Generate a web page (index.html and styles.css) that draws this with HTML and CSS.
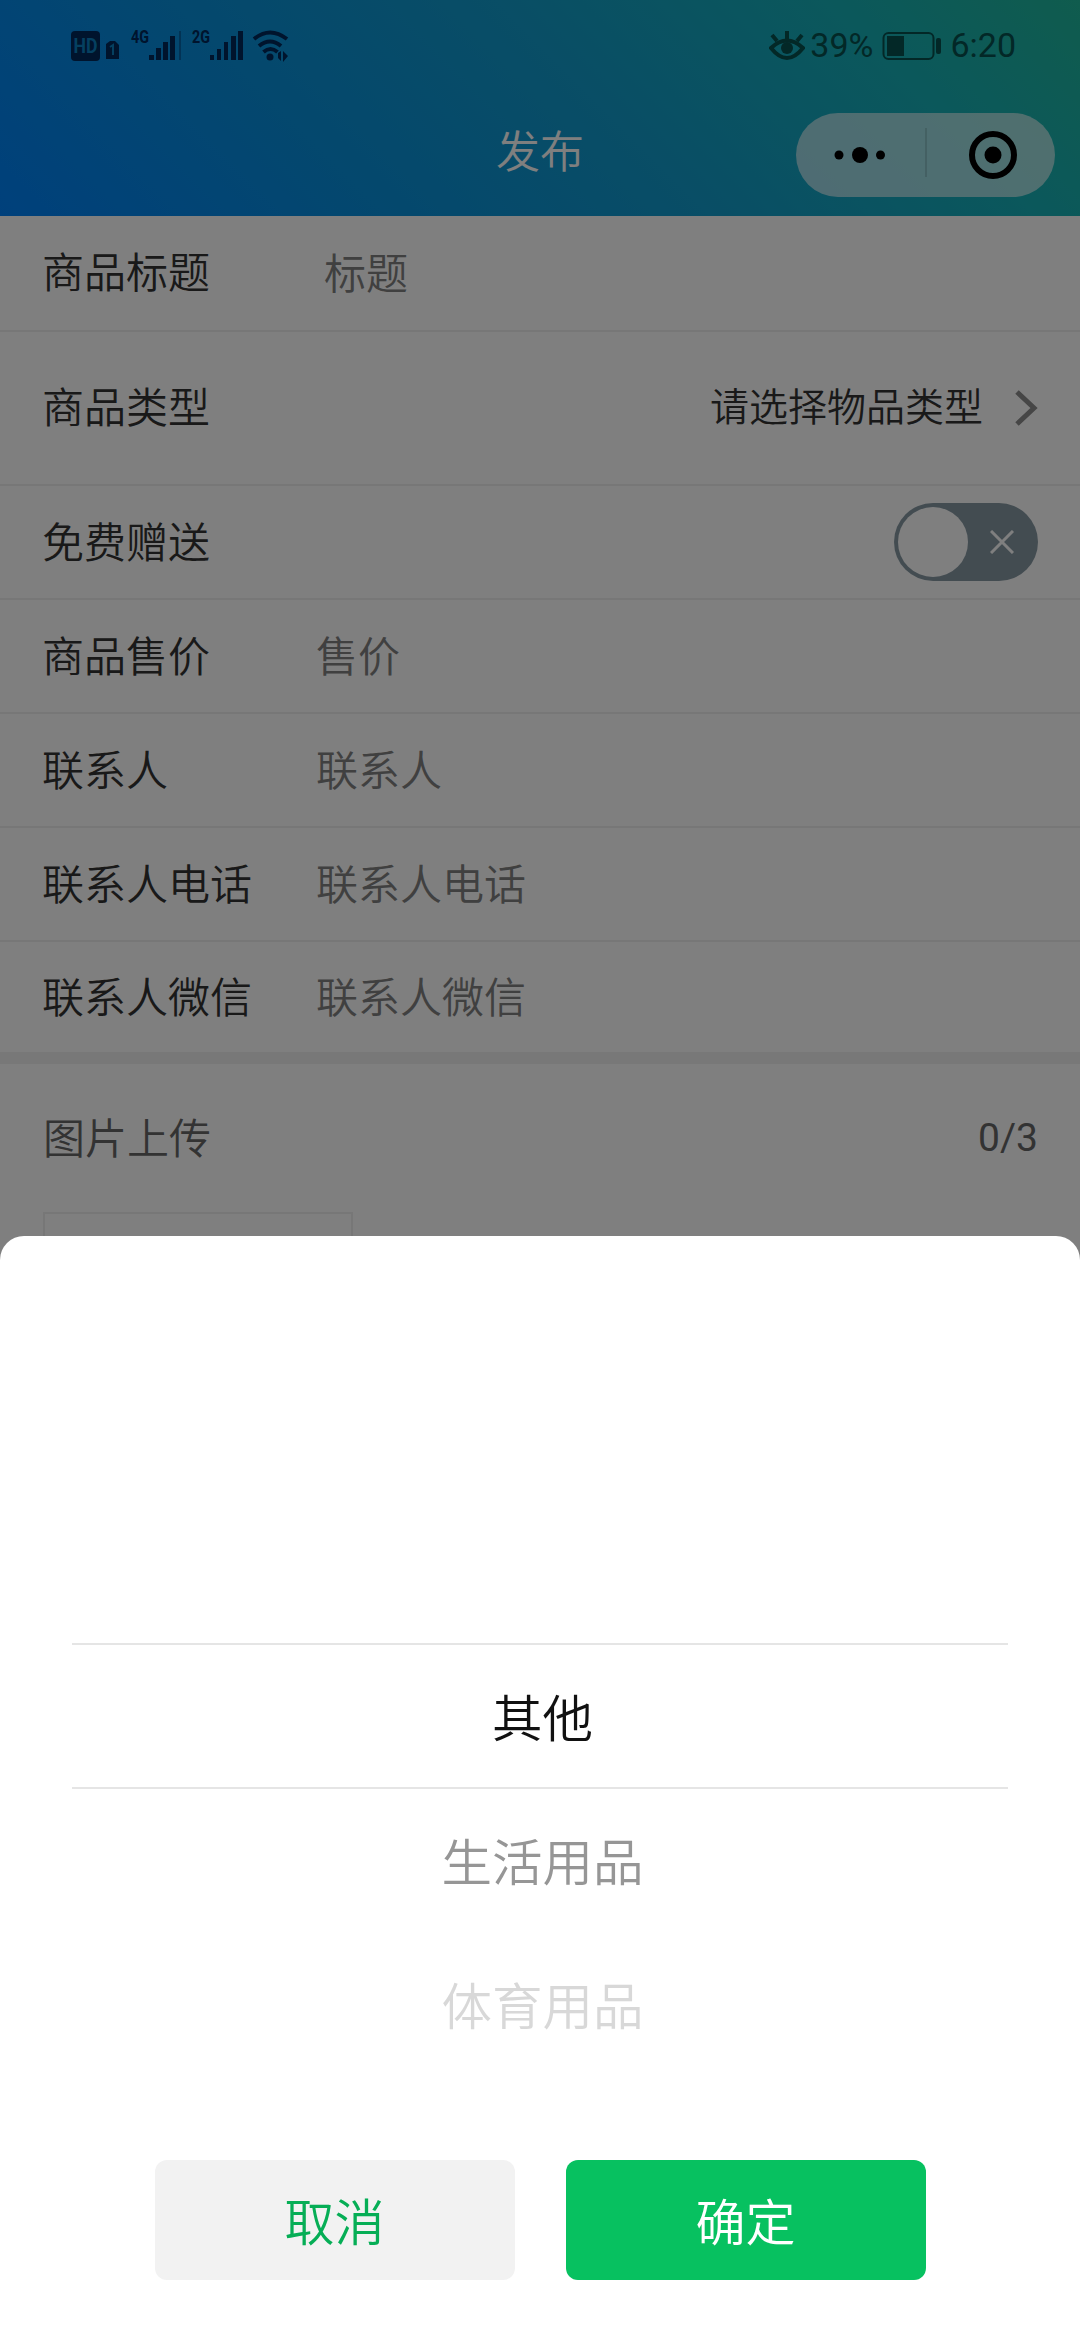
FILE: index.html
```html
<!DOCTYPE html>
<html lang="zh-CN">
<head>
    <meta charset="UTF-8">
    <meta name="viewport" content="width=device-width, initial-scale=1.0">
    <title>发布</title>
    <link rel="stylesheet" href="styles.css">
</head>
<body>
    <header class="header">
        <div class="status-bar">
            <svg class="status-left" width="220" height="36" viewBox="0 0 220 36">
                <rect x="1" y="4" width="29" height="30" rx="4"/>
                <text class="hd" x="3.500" y="26" textLength="24" lengthAdjust="spacingAndGlyphs">HD</text>
                <path d="M36 17l4-3h5l4 4v14h-13z"/>
                <path class="cut" d="M40 20l3-2v10"/>
                <text class="net" x="61" y="16" textLength="18" lengthAdjust="spacingAndGlyphs">4G</text>
                <path d="M79 28h5v5h-5zM86 21h5v12h-5zM93 15h5v18h-5zM100 9h5v24h-5z"/>
                <path class="faint" d="M109 4h2v29h-2z"/>
                <text class="net" x="122" y="16" textLength="18" lengthAdjust="spacingAndGlyphs">2G</text>
                <path d="M140 28h4v5h-4zM147 22h4v11h-4zM154 15h4v18h-4zM161 9h5v24h-5zM168 4h5v29h-5z"/>
                <path class="arc" d="M184 12q16-13 33 0M189 19q11-9 22 0M193.500 25q7-6 14 0"/>
                <circle cx="200" cy="30" r="3.500"/>
                <path d="M208 26l3-2v10l-3-3zM213 24l5 5-5 6z"/>
            </svg>
            <div class="status-right">
                <svg width="36" height="32" viewBox="0 0 36 32">
                    <path class="eye" d="M2 18q16-15 32 0q-16 20-32 0zM3 5l5 6M18 1v8M33 5l-5 6"/>
                    <circle cx="18" cy="18" r="6"/>
                </svg>
                <span class="battery-text">39%</span>
                <svg class="battery" width="60" height="30" viewBox="0 0 60 30">
                    <rect class="outline" x="1.500" y="2" width="50" height="26" rx="5"/>
                    <rect x="5" y="5" width="17" height="20"/>
                    <rect x="54" y="7" width="5" height="16" rx="2"/>
                </svg>
                <span>6:20</span>
            </div>
        </div>
        <div class="nav-bar">
            <h1>发布</h1>
            <div class="capsule">
                <svg width="259" height="84" viewBox="0 0 259 84">
                    <circle cx="43" cy="42" r="4.500"/>
                    <circle cx="64" cy="42" r="8"/>
                    <circle cx="84.500" cy="42" r="4.500"/>
                    <path class="split" d="M130 15v49"/>
                    <circle class="ring" cx="197" cy="42" r="21"/>
                    <circle cx="197" cy="42" r="8.500"/>
                </svg>
            </div>
        </div>
    </header>

    <form class="form">
        <div class="form-group first">
            <label for="title">商品标题</label>
            <input type="text" id="title" placeholder="标题">
        </div>
        <div class="form-group tall">
            <label>商品类型</label>
            <div class="select">
                <span>请选择物品类型</span>
                <svg width="24" height="40" viewBox="0 0 24 40"><path d="M3 4l17 16L3 36"/></svg>
            </div>
        </div>
        <div class="form-group">
            <label>免费赠送</label>
            <div class="switch">
                <div class="knob"></div>
                <svg width="24" height="24" viewBox="0 0 24 24"><path d="M1 1l22 22M23 1L1 23"/></svg>
            </div>
        </div>
        <div class="form-group">
            <label for="price">商品售价</label>
            <input type="text" id="price" placeholder="售价">
        </div>
        <div class="form-group">
            <label for="contact">联系人</label>
            <input type="text" id="contact" placeholder="联系人">
        </div>
        <div class="form-group">
            <label for="phone">联系人电话</label>
            <input type="text" id="phone" placeholder="联系人电话">
        </div>
        <div class="form-group last">
            <label for="wechat">联系人微信</label>
            <input type="text" id="wechat" placeholder="联系人微信">
        </div>
        <div class="upload">
            <div class="upload-title">
                <span class="name">图片上传</span>
                <span class="count">0/3</span>
            </div>
            <div class="upload-box"></div>
        </div>
    </form>

    <div class="mask">
        <div class="picker">
            <ul class="options">
                <li class="active">其他</li>
                <li class="near">生活用品</li>
                <li class="far">体育用品</li>
            </ul>
            <div class="buttons">
                <button type="button" class="cancel">取消</button>
                <button type="button" class="confirm">确定</button>
            </div>
        </div>
    </div>
</body>
</html>
```
FILE: styles.css
```css
* {
    box-sizing: border-box;
}
body {
    margin: 0;
    height: 2340px;
    overflow: hidden;
    background: #fff;
    font-family: Roboto, "Noto Sans CJK SC", sans-serif;
    font-weight: 350;
    font-size: 42px;
    line-height: 1.4;
    color: #333;
}
svg {
    display: block;
    flex: none;
}
.header {
    height: 216px;
    background: linear-gradient(45deg, #0081f8, #0890dc 30%, #129ccc 55%, #16b0b8 80%, #20b89c);
}
.status-bar {
    display: flex;
    justify-content: space-between;
    height: 90px;
    padding: 27px 64px 0 70px;
}
.status-left {
    fill: #00285a;
}
.status-left .hd {
    fill: #0a80c0;
    font-size: 20px;
    font-weight: 700;
}
.status-left .net {
    font-size: 18px;
    font-weight: 700;
}
.status-left .faint {
    opacity: 0.4;
}
.status-left .cut {
    fill: none;
    stroke: #0a80c0;
    stroke-width: 2;
}
.status-left .arc {
    fill: none;
    stroke: #00285a;
    stroke-width: 4;
}
.status-right {
    display: flex;
    align-items: center;
    height: 38px;
    font-size: 34px;
    font-weight: 400;
    color: #06504f;
    fill: #06504f;
}
.status-right .eye {
    fill: none;
    stroke: #06504f;
    stroke-width: 4;
}
.battery-text {
    margin: 0 9px 0 5px;
}
.battery {
    margin-right: 8px;
}
.battery .outline {
    fill: none;
    stroke: #06504f;
    stroke-width: 2;
}
.nav-bar {
    display: grid;
    grid-template-columns: 1fr auto 1fr;
    align-items: center;
    height: 126px;
    padding: 0 25px;
}
.nav-bar h1 {
    grid-column: 2;
    margin: 0 0 1px;
    font-size: 44px;
    font-weight: 350;
    line-height: 60px;
    color: #fff;
}
.capsule {
    justify-self: end;
    margin-top: 4px;
    border-radius: 42px;
    background: rgba(255, 255, 255, 0.58);
}
.capsule .ring {
    fill: none;
    stroke: #000;
    stroke-width: 6;
}
.capsule .split {
    stroke: rgba(0, 0, 0, 0.12);
    stroke-width: 2;
}
.form-group {
    display: flex;
    align-items: center;
    height: 114px;
    padding: 0 42px;
    border-bottom: 2px solid #eee;
}
.form-group label {
    width: 274px;
    padding-top: 4px;
}
.form-group input {
    flex: 1;
    width: 0;
    padding: 5px 0 0;
    border: none;
    background: none;
    font: inherit;
}
.form-group input::placeholder {
    color: #808080;
}
.first {
    height: 116px;
}
.first label {
    width: 282px;
    padding-top: 2px;
}
.tall {
    height: 154px;
}
.tall label {
    padding-top: 2px;
}
.last {
    height: 122px;
    border-bottom: 12px solid #f1f1f1;
}
.select {
    display: flex;
    align-items: center;
    gap: 31px;
    margin-left: auto;
    font-size: 39px;
}
.select path {
    fill: none;
    stroke: #8c8c8c;
    stroke-width: 5;
}
.switch {
    display: flex;
    align-items: center;
    justify-content: space-between;
    width: 144px;
    height: 78px;
    margin-left: auto;
    padding: 0 24px 0 4px;
    border-radius: 39px;
    background: #8799a3;
}
.knob {
    width: 70px;
    height: 70px;
    border-radius: 50%;
    background: #fff;
}
.switch path {
    stroke: #fff;
    stroke-width: 3;
}
.upload {
    padding: 0 42px 0 43px;
    color: #666;
}
.upload-title {
    display: flex;
    align-items: center;
    justify-content: space-between;
    height: 148px;
}
.upload-title .name {
    padding-top: 5px;
}
.count {
    padding-top: 1px;
    font-size: 39px;
    font-weight: 400;
}
.upload-box {
    width: 310px;
    height: 310px;
    border: 2px solid #eee;
}
/* dimmed layer with the bottom sheet */
.mask {
    position: fixed;
    inset: 0;
    display: flex;
    align-items: flex-end;
    background: rgba(0, 0, 0, 0.5);
}
.picker {
    width: 100%;
    height: 1104px;
    padding: 407px 72px 0;
    border-radius: 24px 24px 0 0;
    background: #fff;
}
.options {
    margin: 0;
    padding: 0;
    list-style: none;
    font-size: 50.5px;
    text-align: center;
}
.options li {
    height: 144px;
    padding-left: 5px;
    line-height: 150px;
}
.options .active {
    height: 146px;
    border-top: 2px solid #e5e5e5;
    border-bottom: 2px solid #e5e5e5;
    color: #111;
}
.options .near {
    color: #969696;
}
.options .far {
    color: #d8d8d8;
}
.buttons {
    display: flex;
    justify-content: center;
    gap: 51px;
    margin-top: 83px;
}
.buttons button {
    width: 360px;
    height: 120px;
    padding: 8px 0 0;
    border: none;
    border-radius: 12px;
    font: inherit;
    font-size: 50px;
}
.buttons .cancel {
    background: #f2f2f2;
    color: #06ae56;
}
.buttons .confirm {
    background: #07c160;
    color: #fff;
}
```
